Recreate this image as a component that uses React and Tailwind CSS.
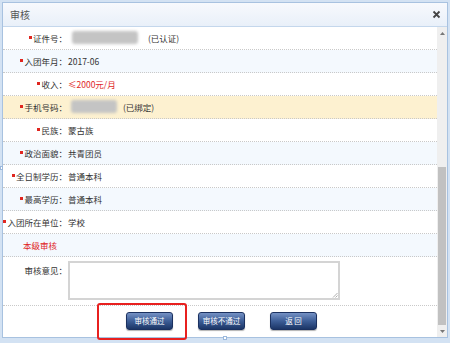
import React from "react";

const Dot = () => <span className="inline-block w-[3px] h-[3px] bg-[#e0261f] mr-[1px] mb-[1px]" />;

function Row({ bg = "bg-white", label, req = true, children }) {
  return (
    <div className={`flex items-center h-[23px] border-b border-dotted border-[#c9c9c9] ${bg}`}>
      <div className="w-[64px] flex items-center justify-end text-[#333] whitespace-nowrap">
        {req && <Dot />}
        <span>{label}</span>
      </div>
      <div className="flex items-center text-[#333] pl-[1px]">{children}</div>
    </div>
  );
}

const Blur = ({ w }) => (
  <span className="inline-block h-[13px] bg-[#c4c4c4] blur-[1.5px] rounded-[3px]" style={{ width: w }} />
);

function Btn({ children, w }) {
  return (
    <div
      className="flex items-center justify-center h-[18px] rounded-[3px] border border-[#1b3160] bg-linear-to-b from-[#7591c4] via-[#3d5e97] to-[#1c3667] text-white text-[7.5px] whitespace-nowrap shadow-[0_1px_1px_rgba(0,0,0,0.3)]"
      style={{ width: w }}
    >
      {children}
    </div>
  );
}

export default function App() {
  return (
    <div className="relative w-[450px] h-[343px] bg-[#d3e2f3] overflow-hidden font-['Noto_Sans_CJK_SC',sans-serif] text-[8.5px] leading-none">
      <div className="absolute left-[2px] top-[2px] w-[446px] h-[336px] border border-[#a8c2e0] bg-white flex flex-col">
        <div className="h-[24px] flex items-center justify-between pl-[7px] pr-[6px] bg-linear-to-b from-[#f7f9fd] to-[#e9f0f9] border-b border-[#c4d7ec]">
          <span className="text-[10px] text-[#555]">审核</span>
          <svg width="9" height="9" viewBox="0 0 9 9">
            <path d="M1.5 1.5 L7.5 7.5 M7.5 1.5 L1.5 7.5" stroke="#444" strokeWidth="1.8" />
          </svg>
        </div>
        <div className="flex flex-1 min-h-0">
          <div className="flex-1 flex flex-col">
            <Row label="证件号：">
              <span className="ml-[4px]"><Blur w={66} /></span>
              <span className="ml-[10px]">(已认证)</span>
            </Row>
            <Row bg="bg-[#f4f9fe]" label="入团年月：">2017-06</Row>
            <Row label="收入：">
              <span className="text-[#e0261f]">≤2000元/月</span>
            </Row>
            <Row bg="bg-[#fdf1d0]" label="手机号码：">
              <span className="ml-[3px]"><Blur w={46} /></span>
              <span className="ml-[6px]">(已绑定)</span>
            </Row>
            <Row label="民族：">蒙古族</Row>
            <Row bg="bg-[#f4f9fe]" label="政治面貌：">共青团员</Row>
            <Row label="全日制学历：">普通本科</Row>
            <Row bg="bg-[#f4f9fe]" label="最高学历：">普通本科</Row>
            <Row label="入团所在单位：">学校</Row>
            <div className="flex items-center h-[23px] border-b border-dotted border-[#c9c9c9] bg-[#f4f9fe]">
              <span className="pl-[20px] text-[#e0261f]">本级审核</span>
            </div>
            <div className="flex h-[49px] border-b border-dotted border-[#c9c9c9] bg-white pt-[4px]">
              <div className="w-[64px] text-right text-[#333] pt-[5px]">审核意见：</div>
              <div className="relative ml-[1px] w-[272px] h-[39px] border-2 border-[#d4d4d4] bg-white">
                <svg className="absolute right-[0px] bottom-[0px]" width="6" height="6" viewBox="0 0 6 6">
                  <path d="M5.5 1 L1 5.5 M5.5 3.5 L3.5 5.5" stroke="#999" strokeWidth="0.8" />
                </svg>
              </div>
            </div>
            <div className="flex-1 flex items-center bg-white pl-[123px] gap-[25px] pb-[1px]">
              <Btn w={47}>审核通过</Btn>
              <Btn w={47}>审核不通过</Btn>
              <Btn w={47}>返 回</Btn>
            </div>
          </div>
          <div className="w-[10px] bg-[#efefef] flex flex-col">
            <div className="h-[12px] flex items-center justify-center">
              <svg width="5" height="3" viewBox="0 0 5 3"><path d="M0 3 L2.5 0 L5 3 Z" fill="#777" /></svg>
            </div>
            <div className="flex-1 pt-[128px] px-[1px]">
              <div className="h-[158px] bg-[#c1c1c1]" />
            </div>
            <div className="h-[12px] flex items-center justify-center">
              <svg width="5" height="3" viewBox="0 0 5 3"><path d="M0 0 L5 0 L2.5 3 Z" fill="#777" /></svg>
            </div>
          </div>
        </div>
      </div>
      <div className="absolute left-[0px] top-[166px] w-[3px] h-[4px] bg-white border border-[#9bb8dc]" />
      <div className="absolute left-[223px] top-[336px] w-[4px] h-[4px] bg-white border border-[#9bb8dc]" />
      <div className="absolute left-[97px] top-[303px] w-[90px] h-[37px] border-2 border-[#e8201f] rounded-[3px]" />
    </div>
  );
}
